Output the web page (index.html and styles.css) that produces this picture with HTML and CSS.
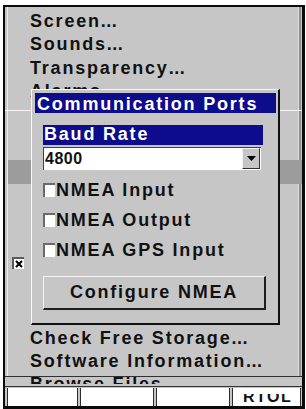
FILE: index.html
```html
<!DOCTYPE html>
<html>
<head>
<meta charset="utf-8">
<link rel="stylesheet" href="styles.css">
</head>
<body>
<div class="screen">
  <div class="panel">
    <div class="item">Screen<span class="dots">...</span></div>
    <div class="item">Sounds<span class="dots">...</span></div>
    <div class="item">Transparency<span class="dots">...</span></div>
    <div class="item">Alarms<span class="dots">...</span></div>
    <div class="sep"></div>
    <div class="item"></div>
    <div class="item"></div>
    <div class="item hl"></div>
    <div class="item"></div>
    <div class="item"></div>
    <div class="item"></div>
    <div class="item chk"><span class="mark"><svg width="8" height="8" viewBox="0 0 8 8"><path d="M1 1L7 7M7 1L1 7" stroke="#000" stroke-width="2"/></svg></span></div>
    <div class="item"></div>
    <div class="item"></div>
    <div class="lower">
      <div class="item">Check Free Storage<span class="dots">...</span></div>
      <div class="item">Software Information<span class="dots">...</span></div>
    </div>
  </div>
  <div class="browse"><div class="browse-clip"><span>Browse Files<span class="dots">...</span></span></div></div>
  <div class="status">
    <div class="cell c1"></div>
    <div class="cell c2"></div>
    <div class="cell c3"></div>
    <div class="cell c4"><div class="cell-clip"><span>RTOL</span></div></div>
  </div>

  <div class="dialog">
    <div class="title">Communication Ports</div>
    <div class="field-label">Baud Rate</div>
    <div class="select">
      <span class="select-value">4800</span>
      <span class="select-btn"><svg width="9" height="5" viewBox="0 0 9 5"><polygon points="0,0 9,0 4.5,5" fill="#000"/></svg></span>
    </div>
    <div class="checks">
      <div class="check-row"><span class="box"></span>NMEA Input</div>
      <div class="check-row"><span class="box"></span>NMEA Output</div>
      <div class="check-row"><span class="box"></span>NMEA GPS Input</div>
    </div>
    <div class="button">Configure NMEA</div>
  </div>
</div>
</body>
</html>
```
FILE: styles.css
```css
* { box-sizing: border-box; }
html, body { margin: 0; padding: 0; }
body {
  width: 306px;
  height: 409px;
  overflow: hidden;
  background: #fff;
  font-family: "Liberation Sans", Arial, sans-serif;
  font-weight: 700;
  font-size: 18px;
  letter-spacing: 1.8px;
  color: #111;
}
.screen {
  position: relative;
  margin: 5px 0 0 3px;
  width: 302px;
  height: 404px;
  border-style: solid;
  border-color: #0a0a0a;
  border-width: 2px 3px 3px 2px;
  background: #c6c6c6;
  display: flex;
  flex-direction: column;
}
.panel {
  height: 370px;
  flex: none;
  padding-top: 3px;
  border-bottom: 1px solid #303030;
  box-shadow: inset 2px 0 0 #c6c6c6, inset 3px 0 0 #ececec,
              inset -1px 0 0 #c6c6c6, inset -3px 0 0 #8e8e8e, inset -4px 0 0 #dcdcdc;
}
.item {
  height: 23.4px;
  line-height: 23.4px;
  padding-left: 25px;
  white-space: nowrap;
}
.dots { letter-spacing: 0.5px; }
.sep { height: 1px; background: #f4f4f4; margin: 6px 0 3px; }
.item.hl { background: #9c9c9c; margin-left: 3px; }
.item.chk { padding-left: 7px; display: flex; align-items: flex-start; }
.mark {
  margin-top: 3px;
  width: 12px;
  height: 12px;
  background: #fafafa;
  border-top: 2px solid #5a5a5a;
  border-left: 2px solid #5a5a5a;
  display: flex;
  align-items: center;
  justify-content: center;
}
.mark svg { display: block; }
.lower { margin-top: 2.9px; }
.browse { height: 9px; flex: none; padding-left: 25px; }
.browse-clip { height: 7px; overflow: hidden; white-space: nowrap; }
.browse-clip > span { display: block; line-height: 23.4px; margin-top: -4px; }
.status {
  height: 20px;
  flex: none;
  border-top: 1px solid #303030;
  padding: 1px 0 0 2px;
  display: flex;
  gap: 2px;
}
.cell {
  height: 18px;
  background: #fff;
  border-left: 1px solid #2e2e2e;
  border-right: 1px solid #2e2e2e;
}
.c1 { width: 71px; }
.c2 { width: 74px; }
.c3 { width: 74px; }
.c4 { width: 69px; padding-left: 10px; }
.cell-clip {
  margin-top: 6px;
  height: 8px;
  overflow: hidden;
  font-size: 16px;
  letter-spacing: 1.5px;
  line-height: 16px;
}
.cell-clip > span { display: block; margin-top: -5.4px; }

.dialog {
  position: absolute;
  left: 26px;
  top: 82px;
  width: 249px;
  height: 236px;
  background: #c6c6c6;
  border-style: solid;
  border-width: 1px 2px 2px 1px;
  border-color: #f8f8f8 #101010 #101010 #f8f8f8;
}
.title {
  margin: 3px 2px 0 3px;
  height: 20px;
  line-height: 23px;
  padding-left: 2px;
  background: #0c0c8c;
  color: #fff;
  white-space: nowrap;
}
.field-label {
  margin: 12px 0 0 11px;
  width: 220px;
  height: 20px;
  line-height: 18px;
  padding-left: 1px;
  background: #0c0c8c;
  color: #fff;
}
.select {
  margin: 2px 0 0 11px;
  width: 218px;
  height: 23px;
  background: #fff;
  border-top: 1px solid #404040;
  border-left: 1px solid #404040;
  display: flex;
  justify-content: space-between;
  align-items: flex-start;
}
.select-value {
  font-size: 16px;
  letter-spacing: 0.5px;
  line-height: 22px;
  padding-left: 1px;
}
.select-btn {
  width: 18px;
  height: 21px;
  margin-right: 1px;
  background: #c6c6c6;
  border-style: solid;
  border-width: 1px;
  border-color: #f0f0f0 #303030 #303030 #f0f0f0;
  display: flex;
  align-items: center;
  justify-content: center;
}
.select-btn svg { display: block; }
.checks { margin-top: 5px; }
.check-row {
  height: 30px;
  line-height: 30px;
  margin-left: 11px;
  display: flex;
  align-items: center;
  white-space: nowrap;
}
.box {
  width: 12px;
  height: 14px;
  margin-right: 1px;
  background: #fff;
  border-top: 2px solid #6a6a6a;
  border-left: 2px solid #6a6a6a;
}
.button {
  margin: 11px 0 0 11px;
  width: 223px;
  height: 34px;
  line-height: 30px;
  text-align: center;
  border-style: solid;
  border-width: 1px 2px 2px 1px;
  border-color: #f4f4f4 #1e1e1e #1e1e1e #f4f4f4;
  white-space: nowrap;
}
```
